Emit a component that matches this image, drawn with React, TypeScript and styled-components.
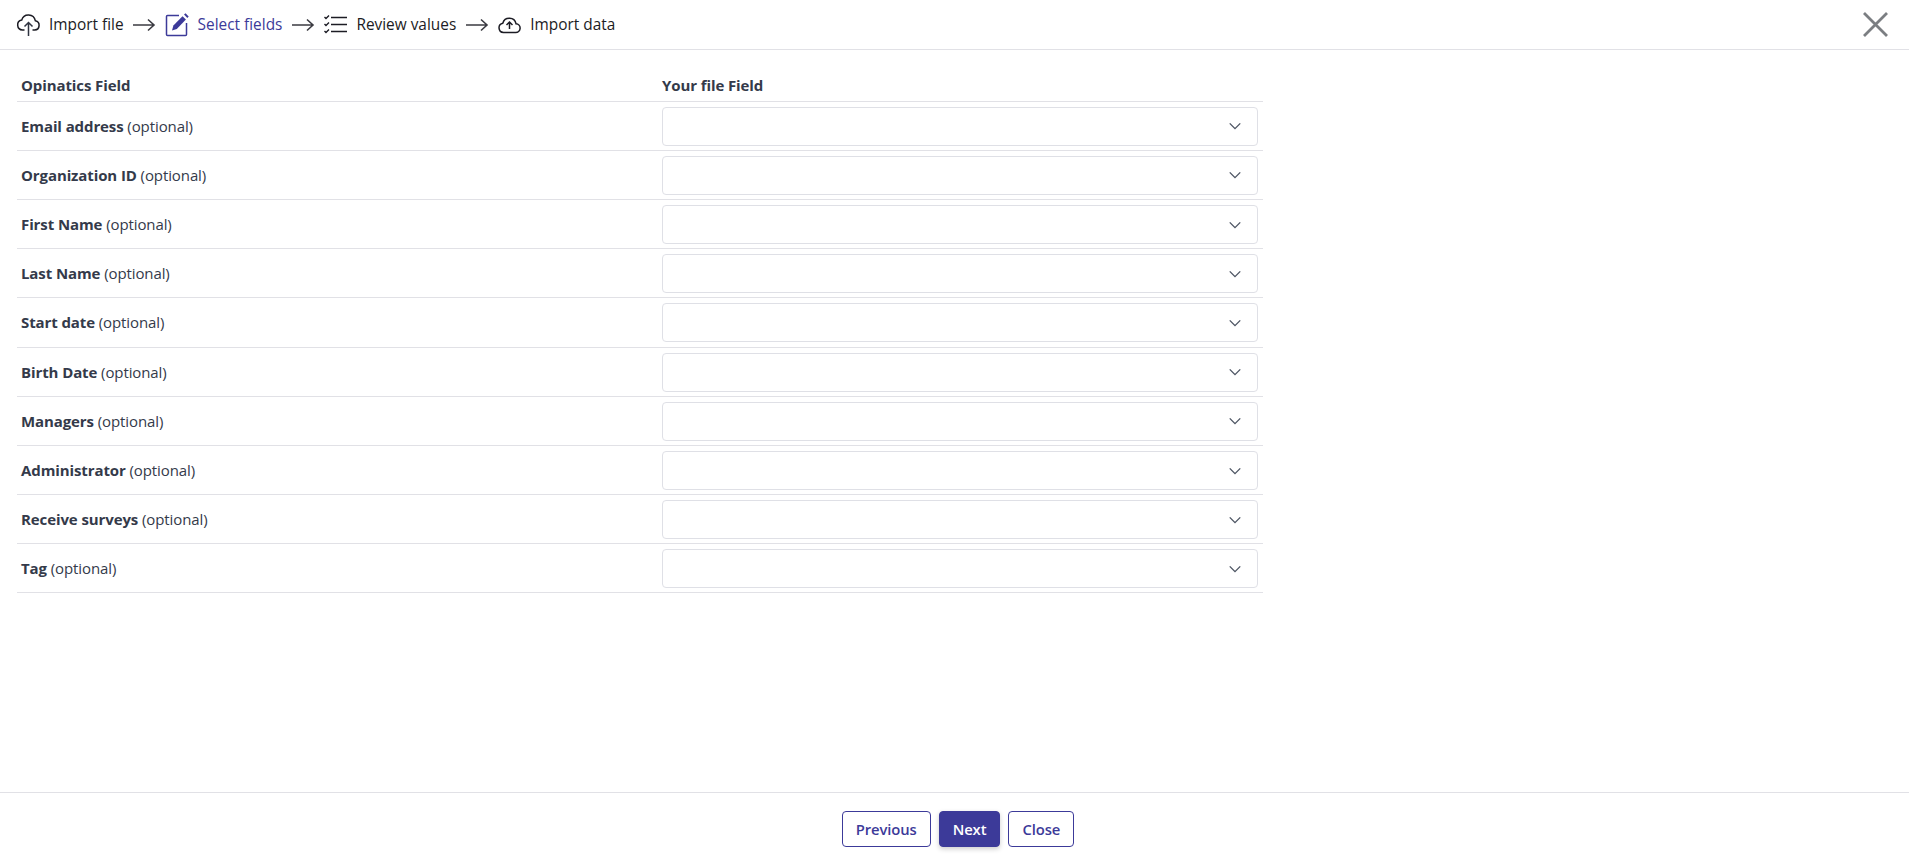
import React from 'react'
import styled, { createGlobalStyle } from 'styled-components'

const Global = createGlobalStyle`
  html, body { margin: 0; height: 100%; background: #fff; }
  #root { height: 100%; }
  * { box-sizing: border-box; }
  body {
    font-family: "Open Sans", "Noto Sans", "Liberation Sans", sans-serif;
    font-size: 15px;
    color: #343a4a;
  }
`

const Page = styled.div`
  display: flex;
  flex-direction: column;
  height: 859px;
`
const Header = styled.header`
  display: flex;
  align-items: center;
  justify-content: space-between;
  height: 50px;
  padding: 0 16px;
  border-bottom: 1px solid #e1e1e6;
`
const Steps = styled.div`
  display: flex;
  align-items: center;
`
const Step = styled.div<{ $active?: boolean }>`
  display: flex;
  align-items: center;
  gap: 8px;
  font-size: 15.4px;
  color: ${p => (p.$active ? '#3c3a99' : '#1c1c24')};
`
const Arrow = styled.svg`
  width: 24px;
  height: 14px;
  margin: 0 8.5px;
  fill: none;
  stroke: #3b3b42;
  stroke-width: 1.6;
`
const CloseIcon = styled.svg`
  width: 25px;
  height: 25px;
  margin-right: 5px;
  stroke: #7b7e82;
  stroke-width: 2.8;
`
const Body = styled.main`
  flex: 1;
  padding: 0 0 0 17px;
`
const Table = styled.div`
  width: 1246px;
`
const HeadRow = styled.div`
  display: grid;
  grid-template-columns: 641px 1fr;
  align-items: end;
  height: 51.6px;
  padding: 0 0 6px 4px;
  border-bottom: 1px solid #e1e1e6;
  font-weight: 700;
  letter-spacing: -0.1px;
`
const Row = styled.div`
  display: grid;
  grid-template-columns: 641px 1fr;
  align-items: center;
  height: 49.2px;
  padding: 0 5px 0 4px;
  border-bottom: 1px solid #e1e1e6;
`
const Label = styled.div`
  letter-spacing: -0.1px;
  b { font-weight: 700; }
`
const Select = styled.div`
  display: flex;
  align-items: center;
  justify-content: flex-end;
  height: 39px;
  margin-top: 1px;
  padding-right: 15px;
  background: #fff;
  border: 1px solid #dfe0e6;
  border-radius: 4px;
`
const Chevron = styled.svg`
  width: 14px;
  height: 14px;
  fill: none;
  stroke: #4d5563;
  stroke-width: 1.6;
`
const Footer = styled.footer`
  display: flex;
  justify-content: center;
  gap: 8px;
  height: 67px;
  padding: 18px 0 0 7px;
  border-top: 1px solid #e1e1e6;
`
const Button = styled.button<{ $primary?: boolean }>`
  height: 36px;
  padding: 0 13px;
  font: inherit;
  font-size: 14.8px;
  font-weight: 600;
  letter-spacing: -0.1px;
  border-radius: 4px;
  border: 1px solid #3c3a99;
  color: ${p => (p.$primary ? '#fff' : '#3c3a99')};
  background: ${p => (p.$primary ? '#3c3a99' : '#fff')};
  box-shadow: ${p => (p.$primary ? '0 2px 5px rgba(0,0,0,.2)' : 'none')};
`

const StepArrow = () => (
  <Arrow viewBox="0 0 24 14">
    <path d="M1 7h21M16 1.5 22 7l-6 5.5" />
  </Arrow>
)

const fields = [
  'Email address',
  'Organization ID',
  'First Name',
  'Last Name',
  'Start date',
  'Birth Date',
  'Managers',
  'Administrator',
  'Receive surveys',
  'Tag',
]

export default function App() {
  return (
    <Page>
      <Global />
      <Header>
        <Steps>
          <Step>
            <svg width="25" height="25" viewBox="0 0 25 25" fill="none" stroke="#1c1c24" strokeWidth="1.5">
              <path d="M8.5 18H6.5a5 5 0 0 1-.8-9.9 7 7 0 0 1 13.6.6 4.7 4.7 0 0 1-.6 9.3H16.5" />
              <path d="M12.5 24V10.5M8.5 14.5l4-4 4 4" stroke="#2f3340" />
            </svg>
            Import file
          </Step>
          <StepArrow />
          <Step $active>
            <svg width="25" height="25" viewBox="0 0 25 25" fill="none">
              <path d="M14 3.5H2.5a1 1 0 0 0-1 1v18a1 1 0 0 0 1 1h18a1 1 0 0 0 1-1V11" stroke="#3c3a99" strokeWidth="1.5" />
              <path d="M7 18.5l1.4-5L17.5 4.2l3.4 3.4L11.8 17z" fill="#3c3a99" />
              <path d="M19 2.6l1.5-1.4 3.2 3.2-1.4 1.6z" fill="#3c3a99" />
            </svg>
            Select fields
          </Step>
          <StepArrow />
          <Step>
            <svg width="25" height="25" viewBox="0 0 25 25" fill="none" stroke="#1c1c24" strokeWidth="1.7">
              <path d="M8 5.5h16M8 12.5h16M8 19.5h16" />
              <path d="M1.5 5l1.5 1.5L6 3.5M1.5 12l1.5 1.5 3-3M1.5 19l1.5 1.5 3-3" strokeWidth="1.4" />
            </svg>
            Review values
          </Step>
          <StepArrow />
          <Step>
            <svg width="25" height="25" viewBox="0 0 25 25" fill="none" stroke="#1c1c24" strokeWidth="1.5">
              <path d="M6.5 20.5a4.7 4.7 0 0 1-.7-9.3 6.8 6.8 0 0 1 13.2.5 4.4 4.4 0 0 1-.6 8.8z" />
              <path d="M12.5 17v-7M9.5 13l3-3 3 3" />
            </svg>
            Import data
          </Step>
        </Steps>
        <CloseIcon viewBox="0 0 25 25">
          <path d="M1 1l23 23M24 1 1 24" />
        </CloseIcon>
      </Header>
      <Body>
        <Table>
          <HeadRow>
            <div>Opinatics Field</div>
            <div>Your file Field</div>
          </HeadRow>
          {fields.map(name => (
            <Row key={name}>
              <Label>
                <b>{name}</b> (optional)
              </Label>
              <Select>
                <Chevron viewBox="0 0 16 16">
                  <path d="M2 5l6 6 6-6" />
                </Chevron>
              </Select>
            </Row>
          ))}
        </Table>
      </Body>
      <Footer>
        <Button>Previous</Button>
        <Button $primary>Next</Button>
        <Button>Close</Button>
      </Footer>
    </Page>
  )
}
